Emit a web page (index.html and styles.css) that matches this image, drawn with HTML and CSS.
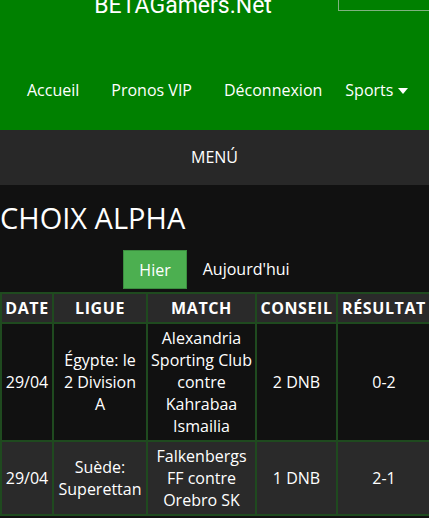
FILE: index.html
```html
<!DOCTYPE html>
<html lang="fr">
<head>
<meta charset="utf-8">
<title>BETAGamers.Net</title>
<link rel="stylesheet" href="styles.css">
</head>
<body>
<header class="site-header">
  <div class="brand">BETAGamers.Net</div>
  <div class="search-box"></div>
  <nav class="main-nav">
    <a href="#">Accueil</a>
    <a href="#">Pronos VIP</a>
    <a href="#">Déconnexion</a>
    <a href="#" class="dropdown">Sports <svg class="caret" width="10" height="6" viewBox="0 0 10 6"><path d="M0 0H10L5 6Z" fill="#fff"/></svg></a>
  </nav>
</header>
<div class="menu-bar">MENÚ</div>
<main class="content">
  <h1 class="page-title">CHOIX ALPHA</h1>
  <div class="tabs">
    <button class="tab active">Hier</button>
    <button class="tab">Aujourd'hui</button>
  </div>
  <table class="picks">
    <colgroup>
      <col class="c-date"><col class="c-league"><col class="c-match"><col class="c-tip"><col class="c-result">
    </colgroup>
    <thead>
      <tr><th>DATE</th><th>LIGUE</th><th>MATCH</th><th>CONSEIL</th><th>RÉSULTAT</th></tr>
    </thead>
    <tbody>
      <tr class="odd">
        <td>29/04</td>
        <td>Égypte: le 2 Division A</td>
        <td class="match">Alexandria Sporting Club contre Kahrabaa Ismailia</td>
        <td>2 DNB</td>
        <td>0-2</td>
      </tr>
      <tr class="even">
        <td>29/04</td>
        <td>Suède: Superettan</td>
        <td class="match">Falkenbergs FF contre Orebro SK</td>
        <td>1 DNB</td>
        <td>2-1</td>
      </tr>
    </tbody>
  </table>
</main>
</body>
</html>
```

FILE: styles.css
```css
html, body {
  margin: 0;
  padding: 0;
}
body {
  background: #111111;
  color: #ffffff;
  font-family: "Open Sans", "DejaVu Sans", sans-serif;
  font-size: 16px;
  overflow: hidden;
}
.site-header {
  position: relative;
  display: flex;
  flex-direction: column;
  background: #008000;
  height: 130px;
}
.brand {
  font-family: Roboto, "Open Sans", sans-serif;
  font-size: 23px;
  line-height: 23px;
  text-align: center;
  margin-top: -6px;
  padding-right: 63px;
  color: #fff;
}
.search-box {
  position: absolute;
  left: 338px;
  top: -21px;
  width: 100px;
  height: 30px;
  border: 1px solid #7fb27f;
}
.main-nav {
  display: flex;
  gap: 32px;
  padding-left: 27px;
  margin-top: 62px;
  line-height: 22px;
}
.main-nav a {
  color: #fff;
  text-decoration: none;
  font-size: 16px;
  white-space: nowrap;
}
.main-nav .dropdown {
  margin-left: -9px;
}
.caret {
  vertical-align: middle;
  position: relative;
  top: -1px;
}
.menu-bar {
  background: #282828;
  height: 55px;
  line-height: 55px;
  text-align: center;
  font-size: 16px;
}
.content {
  padding-top: 15px;
}
.page-title {
  margin: 0;
  font-size: 29px;
  line-height: 35px;
  font-weight: normal;
}
.tabs {
  display: flex;
  justify-content: center;
  margin-top: 15px;
}
.tab {
  font-family: "Open Sans", "DejaVu Sans", sans-serif;
  font-size: 16px;
  color: #fff;
  background: transparent;
  border: none;
  padding: 0 16px;
  height: 39px;
  line-height: 39px;
}
.tab.active {
  background: #4caf50;
  border: 1px solid #3b8e3f;
  padding: 0 15px;
}
.picks {
  margin-top: 3px;
  border-collapse: collapse;
  table-layout: fixed;
  width: 430px;
}
.c-date { width: 52px; }
.c-league { width: 94px; }
.c-match { width: 109px; }
.c-tip { width: 81px; }
.c-result { width: 94px; }
.picks th, .picks td {
  border: 2px solid #1f4a1f;
  padding: 3px 4px;
  line-height: 22px;
  text-align: center;
  vertical-align: middle;
}
.picks th {
  background: #2a2a2a;
  font-weight: bold;
  letter-spacing: 0.6px;
  padding: 3px 1px;
}
.picks td.match {
  padding: 3px 2px;
}
.picks td:first-child {
  padding: 3px 2px;
}
.picks tr.odd td {
  background: #111111;
}
.picks tr.even td {
  background: #2a2a2a;
}
```
